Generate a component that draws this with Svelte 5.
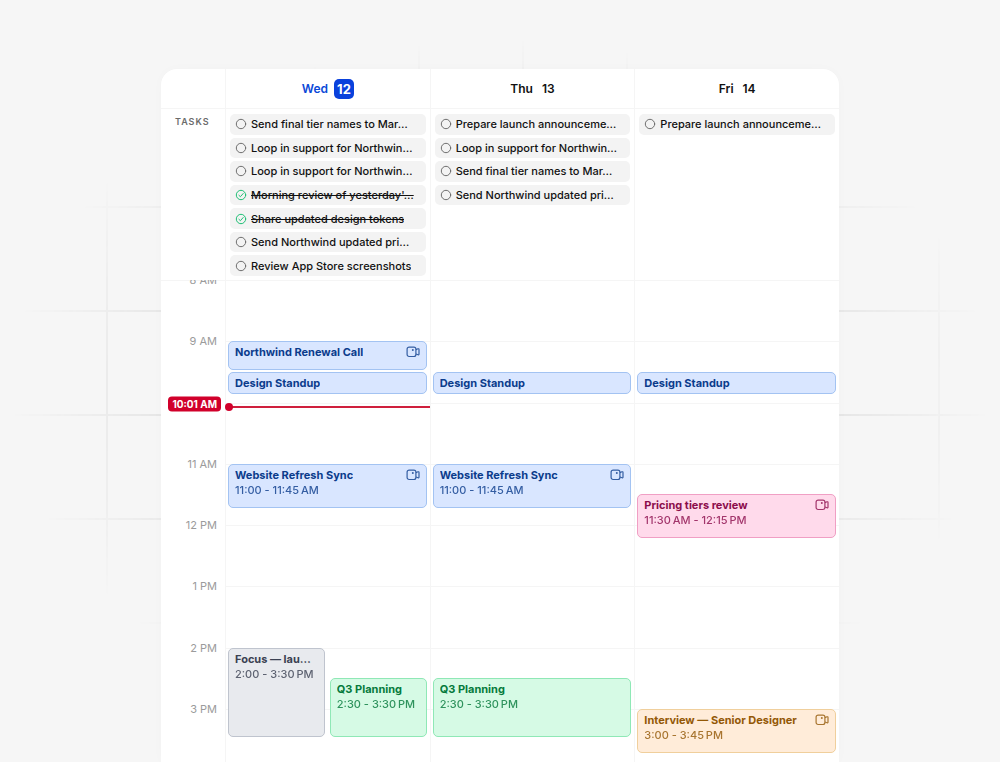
<script lang="ts">
	type Task = { title: string; done?: boolean };
	type Event = {
		title: string;
		time?: string;
		start: number;
		end: number;
		color: 'blue' | 'pink' | 'gray' | 'green' | 'orange';
		lane?: 'left' | 'right';
		call?: boolean;
	};
	type Day = { id: string; name: string; date: number; today?: boolean; tasks: Task[]; events: Event[] };

	const firstHour = 8;
	const hours = [8, 9, 10, 11, 12, 13, 14, 15];
	const now = 10 + 1 / 60;

	// AM and PM are set off with a narrow space (\u202f)
	let days: Day[] = $state([
		{
			id: 'wed',
			name: 'Wed',
			date: 12,
			today: true,
			tasks: [
				{ title: 'Send final tier names to Mar…' },
				{ title: 'Loop in support for Northwin…' },
				{ title: 'Loop in support for Northwin…' },
				{ title: "Morning review of yesterday'…", done: true },
				{ title: 'Share updated design tokens', done: true },
				{ title: 'Send Northwind updated pri…' },
				{ title: 'Review App Store screenshots' }
			],
			events: [
				{ title: 'Northwind Renewal Call', start: 9, end: 9.5, color: 'blue', call: true },
				{ title: 'Design Standup', start: 9.5, end: 9.75, color: 'blue' },
				{ title: 'Website Refresh Sync', time: '11:00 - 11:45\u202fAM', start: 11, end: 11.75, color: 'blue', call: true },
				{ title: 'Focus — lau…', time: '2:00 - 3:30\u202fPM', start: 14, end: 15.5, color: 'gray', lane: 'left' },
				{ title: 'Q3 Planning', time: '2:30 - 3:30\u202fPM', start: 14.5, end: 15.5, color: 'green', lane: 'right' }
			]
		},
		{
			id: 'thu',
			name: 'Thu',
			date: 13,
			tasks: [
				{ title: 'Prepare launch announceme…' },
				{ title: 'Loop in support for Northwin…' },
				{ title: 'Send final tier names to Mar…' },
				{ title: 'Send Northwind updated pri…' }
			],
			events: [
				{ title: 'Design Standup', start: 9.5, end: 9.75, color: 'blue' },
				{ title: 'Website Refresh Sync', time: '11:00 - 11:45\u202fAM', start: 11, end: 11.75, color: 'blue', call: true },
				{ title: 'Q3 Planning', time: '2:30 - 3:30\u202fPM', start: 14.5, end: 15.5, color: 'green' }
			]
		},
		{
			id: 'fri',
			name: 'Fri',
			date: 14,
			tasks: [{ title: 'Prepare launch announceme…' }],
			events: [
				{ title: 'Design Standup', start: 9.5, end: 9.75, color: 'blue' },
				{ title: 'Pricing tiers review', time: '11:30\u202fAM - 12:15\u202fPM', start: 11.5, end: 12.25, color: 'pink', call: true },
				{ title: 'Interview — Senior Designer', time: '3:00 - 3:45\u202fPM', start: 15, end: 15.75, color: 'orange', call: true }
			]
		}
	]);

	const nowTop = `${((now - firstHour) / hours.length) * 100}%`;

	function hourLabel(hour: number) {
		return hour > 12 ? `${hour - 12} PM` : `${hour} ${hour === 12 ? 'PM' : 'AM'}`;
	}

	// the grid has four rows per hour
	function row(hour: number) {
		return (hour - firstHour) * 4 + 1;
	}
</script>

<main class="page">
	<div class="backdrop" aria-hidden="true"></div>

	<section class="calendar" aria-label="Calendar">
		<header class="columns head">
			<div class="gutter"></div>
			{#each days as day (day.id)}
				<h2 class="day-name" class:today={day.today}>
					<span>{day.name}</span>
					<span class="date">{day.date}</span>
				</h2>
			{/each}
		</header>

		<div class="columns tasks">
			<div class="gutter tasks-title">TASKS</div>
			{#each days as day (day.id)}
				<ul class="task-list">
					{#each day.tasks as task}
						<li>
							<label class="task" class:done={task.done}>
								<span class="check">
									<input type="checkbox" bind:checked={task.done} />
									<svg viewBox="0 0 12 12" aria-hidden="true">
										<circle cx="6" cy="6" r="4.7" />
										{#if task.done}
											<path d="M3.9 6.3 5.4 7.7 8.2 4.5" />
										{/if}
									</svg>
								</span>
								<span class="task-title">{task.title}</span>
							</label>
						</li>
					{/each}
				</ul>
			{/each}
		</div>

		<div class="scroller">
			<div class="columns timeline">
				<div class="hours">
					{#each hours as hour}
						<div class="hour">
							<span class="hour-label">{hour === 10 ? '' : hourLabel(hour)}</span>
							<span class="hour-line"></span>
						</div>
					{/each}
				</div>

				<div class="gutter now-gutter">
					<span class="now-badge" style="top: {nowTop}">10:01 AM</span>
				</div>

				{#each days as day, i (day.id)}
					<div class="day" style="grid-column: {i + 2}">
						{#each day.events as event}
							<button
								type="button"
								class="event {event.color} {event.lane ?? ''}"
								class:short={event.end - event.start < 0.5}
								style="grid-row: {row(event.start)} / {row(event.end)}"
							>
								<span class="event-head">
									<span class="event-title">{event.title}</span>
									{#if event.call}
										<svg class="video" viewBox="0 0 14 12" aria-hidden="true">
											<rect x="1.1" y="1.1" width="8.8" height="9.4" rx="2" />
											<path d="M9.9 3.6 12 2.8c.6-.2 1 .1 1 .6v4.8c0 .5-.4.8-1 .6L9.9 8" />
											<circle class="lens" cx="6.8" cy="4.1" r="1" />
										</svg>
									{/if}
								</span>
								{#if event.time}
									<span class="event-time">{event.time}</span>
								{/if}
							</button>
						{/each}
						{#if day.today}
							<div class="now-line" style="top: {nowTop}"></div>
						{/if}
					</div>
				{/each}
			</div>
		</div>
	</section>
</main>

<style>
	:global(body) {
		margin: 0;
		background: #f6f6f6;
	}

	.page {
		position: relative;
		height: 100vh;
		box-sizing: border-box;
		padding: 69px 16px 0;
		display: flex;
		flex-direction: column;
		align-items: center;
		overflow: hidden;
		font-family: Inter, 'Liberation Sans', sans-serif;
		font-size: 12px;
		color: #111;
	}

	.backdrop {
		position: absolute;
		inset: 0;
		background-image: linear-gradient(#dcdcdc 2px, transparent 2px),
			linear-gradient(90deg, #dcdcdc 2px, transparent 2px);
		background-size: 104px 104px;
		background-position: 2px 102px;
		-webkit-mask-image: radial-gradient(490px 350px at 50% 51%, #000 50%, transparent 100%);
		mask-image: radial-gradient(490px 350px at 50% 51%, #000 50%, transparent 100%);
	}

	.calendar {
		position: relative;
		flex: 1;
		min-height: 0;
		width: 100%;
		max-width: 678px;
		display: flex;
		flex-direction: column;
		overflow: hidden;
		border-radius: 16px 16px 0 0;
		background: #fff;
		box-shadow: 0 0 12px rgba(0, 0, 0, 0.02);
	}

	.columns {
		display: grid;
		grid-template-columns: 64px repeat(3, minmax(0, 1fr));
	}

	.head {
		height: 39px;
		border-bottom: 1px solid #f5f5f5;
	}

	.day-name {
		margin: 0;
		display: flex;
		align-items: center;
		justify-content: center;
		gap: 9px;
		border-left: 1px solid #f5f5f5;
		font-size: 12px;
		font-weight: 600;
	}

	.today {
		gap: 6px;
		color: #0a48d8;
	}

	.today .date {
		padding: 0 3px;
		border-radius: 5px;
		background: #0a41dc;
		color: #fff;
		font-size: 13px;
		font-weight: 700;
		line-height: 20px;
	}

	.tasks-title {
		padding: 5px 0 0 14px;
		font-size: 9px;
		font-weight: 600;
		letter-spacing: 1px;
		line-height: 16px;
		color: #6b6b6b;
	}

	.task-list {
		margin: 0;
		padding: 5px 4px 4px;
		height: 162px;
		display: grid;
		grid-template-rows: repeat(7, minmax(0, 1fr));
		gap: 3px;
		list-style: none;
		border-left: 1px solid #f5f5f5;
	}

	.task {
		height: 100%;
		box-sizing: border-box;
		padding: 0 5px;
		display: flex;
		align-items: center;
		gap: 4px;
		border-radius: 5px;
		background: #f3f3f3;
	}

	.task-title {
		overflow: hidden;
		white-space: nowrap;
		font-size: 11px;
		font-weight: 500;
		line-height: 20px;
	}

	.done .task-title {
		text-decoration: line-through;
	}

	.check {
		flex: none;
		display: grid;
		width: 12px;
		height: 12px;
	}

	.check input {
		grid-area: 1 / 1;
		margin: 0;
		width: 12px;
		height: 12px;
		appearance: none;
	}

	.check svg {
		grid-area: 1 / 1;
		pointer-events: none;
		fill: none;
		stroke: #6f6f6f;
		stroke-width: 1;
		stroke-linecap: round;
		stroke-linejoin: round;
	}

	.done .check svg {
		stroke: #1fbf75;
	}

	.scroller {
		flex: 1;
		min-height: 0;
		overflow: hidden;
		box-shadow: inset 0 1px 0 #f5f5f5;
	}

	.timeline {
		height: 490px;
		grid-template-rows: 100%;
	}

	.hours {
		grid-area: 1 / 1 / 2 / -1;
		display: grid;
		grid-template-rows: repeat(8, minmax(0, 1fr));
	}

	.hour {
		display: grid;
		grid-template-columns: 64px 1fr;
	}

	/* zero line height centres the label on the hour line */
	.hour-label {
		padding-right: 8px;
		text-align: right;
		font-size: 11px;
		line-height: 0;
		color: #9b9b9b;
	}

	.hour-line {
		border-top: 1px solid #f5f5f5;
	}

	.now-gutter {
		grid-area: 1 / 1;
		position: relative;
	}

	.now-badge {
		position: absolute;
		right: 4px;
		padding: 0 4px;
		border-radius: 4px;
		background: #d1002b;
		color: #fff;
		font-size: 10px;
		font-weight: 700;
		line-height: 15px;
		white-space: nowrap;
		transform: translateY(-50%);
	}

	.day {
		grid-row: 1;
		position: relative;
		display: grid;
		grid-template-columns: repeat(2, minmax(0, 1fr));
		grid-template-rows: repeat(32, minmax(0, 1fr));
		column-gap: 5px;
		padding: 0 3px 0 2px;
		border-left: 1px solid #f5f5f5;
	}

	.event {
		grid-column: 1 / -1;
		margin: 0 0 2px;
		padding: 2px 6px;
		display: flex;
		flex-direction: column;
		align-items: stretch;
		overflow: hidden;
		border: 1px solid;
		border-radius: 5px;
		font-family: inherit;
		text-align: left;
	}

	.event.left {
		grid-column: 1;
	}

	.event.right {
		grid-column: 2;
	}

	.event.short {
		min-height: 22px;
	}

	.event-head {
		display: flex;
		align-items: center;
		justify-content: space-between;
	}

	.event-title {
		overflow: hidden;
		white-space: nowrap;
		font-size: 11px;
		font-weight: 700;
		line-height: 16px;
	}

	.event-time {
		white-space: nowrap;
		font-size: 11px;
		font-weight: 500;
		line-height: 15px;
		opacity: 0.8;
	}

	.video {
		flex: none;
		width: 14px;
		height: 12px;
		fill: none;
		stroke: currentColor;
		stroke-width: 1.2;
		stroke-linejoin: round;
		opacity: 0.8;
	}

	.lens {
		fill: currentColor;
		stroke: none;
	}

	.blue {
		background: #d9e6ff;
		border-color: #a3c3f2;
		color: #0b3c8c;
	}

	.pink {
		background: #ffdaeb;
		border-color: #f09fc4;
		color: #8c0d4c;
	}

	.gray {
		background: #e8eaee;
		border-color: #bfc4ce;
		color: #3b4152;
	}

	.green {
		background: #d6fae5;
		border-color: #8fe8b6;
		color: #067a3c;
	}

	.orange {
		background: #ffecd9;
		border-color: #f0cf9c;
		color: #935806;
	}

	.now-line {
		position: absolute;
		left: 3px;
		right: 0;
		height: 2px;
		margin-top: 2px;
		background: #cf1f3d;
	}

	.now-line::before {
		content: '';
		position: absolute;
		left: -4px;
		top: -3px;
		width: 8px;
		height: 8px;
		border-radius: 50%;
		background: #d1002b;
	}
</style>
